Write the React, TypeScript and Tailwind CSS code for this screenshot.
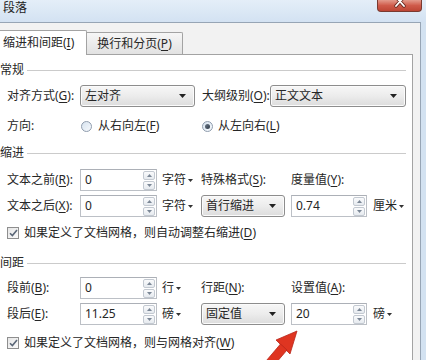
import React from "react";

function Mn({ c }: { c: string }) {
  return <span className="underline underline-offset-[2px] decoration-[1px]">{c}</span>;
}

function Caret({ color = "#222" }: { color?: string }) {
  return (
    <svg width="7" height="4" viewBox="0 0 7 4" className="shrink-0">
      <path d="M0 0h7L3.5 4z" fill={color} />
    </svg>
  );
}

function SmallCaret() {
  return (
    <svg width="5" height="3" viewBox="0 0 5 3" className="shrink-0 ml-[2px] mt-[1px]">
      <path d="M0 0h5L2.5 3z" fill="#333" />
    </svg>
  );
}

function Select({ text, w }: { text: string; w: string }) {
  return (
    <div
      className={`${w} h-[22px] shrink-0 rounded-[3px] border border-[#8d8d8d] bg-linear-to-b from-[#f7f7f7] via-[#ececec] to-[#dcdcdc] shadow-[inset_0_0_0_1px_#fbfbfb] flex items-center justify-between pl-[4px] pr-[8px]`}
    >
      <span>{text}</span>
      <Caret />
    </div>
  );
}

function SpinBtn({ up }: { up?: boolean }) {
  return (
    <div className="w-[12px] h-[9px] rounded-[2px] border border-[#c3c9d1] bg-linear-to-b from-[#fafbfc] to-[#e6eaef] flex items-center justify-center">
      <svg width="5" height="3" viewBox="0 0 5 3">
        <path d={up ? "M0 3h5L2.5 0z" : "M0 0h5L2.5 3z"} fill="#7b8796" />
      </svg>
    </div>
  );
}

function Spin({ value, w }: { value: string; w: string }) {
  return (
    <div
      className={`${w} h-[22px] shrink-0 border border-[#bcc0c6] border-t-[#acb0b7] bg-white flex items-center justify-between pl-[4px] pr-[1px]`}
    >
      <span>{value}</span>
      <div className="flex flex-col gap-[1px]">
        <SpinBtn up />
        <SpinBtn />
      </div>
    </div>
  );
}

function Unit({ text, w }: { text: string; w: string }) {
  return (
    <div className={`${w} shrink-0 flex items-center`}>
      <span>{text}</span>
      <SmallCaret />
    </div>
  );
}

function Heading({ text }: { text: string }) {
  return (
    <div className="h-[16px] flex items-center">
      <span className="leading-[16px]">{text}</span>
      <div className="flex-1 h-px bg-[#cbcbcb] ml-[3px] mr-[6px]" />
    </div>
  );
}

function Radio({ checked }: { checked?: boolean }) {
  return (
    <div className="w-[11px] h-[11px] shrink-0 rounded-full border border-[#8f9cad] bg-linear-to-br from-[#d7e3ef] to-[#f6f9fc] flex items-center justify-center">
      {checked && <div className="w-[5px] h-[5px] rounded-full bg-linear-to-br from-[#6c7a8a] to-[#2f3a47]" />}
    </div>
  );
}

function Check() {
  return (
    <div className="w-[12px] h-[12px] shrink-0 border border-[#8e8e8e] bg-linear-to-br from-[#e6e6e6] to-[#fafafa] flex items-center justify-center">
      <svg width="9" height="8" viewBox="0 0 9 8">
        <path d="M1 4.2 L3.4 6.6 L8 1" stroke="#5a6677" strokeWidth="1.6" fill="none" />
      </svg>
    </div>
  );
}

export default function App() {
  return (
    <div className="relative w-[426px] h-[360px] overflow-hidden bg-[#dbe7f4] text-[12px] leading-[16px] text-[#262626] [font-family:'Noto_Sans','Noto_Sans_CJK_SC',sans-serif]">
      {/* Title bar */}
      <div className="h-[22px] flex items-start bg-linear-to-b from-[#e4eef8] to-[#d3e2f2]">
        <span className="pl-[3px] leading-[16px] text-[#1e1e1e]">段落</span>
        <div className="ml-auto mr-[4px] w-[45px] h-[12px] rounded-b-[4px] border border-t-0 border-[#7a3a30] bg-linear-to-b from-[#e39a8c] via-[#cf5a4a] to-[#bd4534] flex items-start justify-center">
          <svg width="12" height="8" viewBox="0 0 12 8">
            <path d="M2 -3 L10 6 M10 -3 L2 6" stroke="#6b2a22" strokeWidth="3.4" strokeLinecap="round" />
            <path d="M2 -3 L10 6 M10 -3 L2 6" stroke="#ffffff" strokeWidth="1.8" strokeLinecap="round" />
          </svg>
        </div>
      </div>

      {/* Body */}
      <div className="flex h-[338px]">
        <div className="w-[421px] shrink-0 border-t border-r border-[#97a5b5] bg-[#f2f2f2] pt-[7px]">
          {/* Tabs */}
          <div className="flex items-end h-[24px]">
            <div className="relative z-10 w-[87px] h-[25px] -mb-[1px] bg-white border-t border-r border-[#a3a3a3] rounded-tr-[2px] pl-[3px] flex items-center">
              <span>
                缩进和间距(<Mn c="I" />)
              </span>
            </div>
            <div className="w-[96px] h-[22px] border-t border-r border-[#a3a3a3] rounded-tr-[2px] bg-linear-to-b from-[#f6f6f6] to-[#e2e2e2] flex items-center justify-center">
              <span>
                换行和分页(<Mn c="P" />)
              </span>
            </div>
          </div>

          {/* Panel */}
          <div className="w-[413px] h-[320px] bg-white border-t border-r border-[#a3a3a3] flex flex-col">
            <div className="mt-[7px]">
              <Heading text="常规" />
            </div>

            <div className="mt-[7px] h-[22px] flex items-center">
              <span className="w-[80px] pl-[7px] shrink-0">
                对齐方式(<Mn c="G" />):
              </span>
              <Select text="左对齐" w="w-[115px]" />
              <span className="ml-[7px] w-[68px] shrink-0 whitespace-nowrap">
                大纲级别(<Mn c="O" />):
              </span>
              <Select text="正文文本" w="w-[136px]" />
            </div>

            <div className="mt-[11px] h-[16px] flex items-center">
              <span className="w-[81px] pl-[7px] shrink-0">方向:</span>
              <div className="w-[121px] shrink-0 flex items-center gap-[6px]">
                <Radio />
                <span>
                  从右向左(<Mn c="F" />)
                </span>
              </div>
              <div className="flex items-center gap-[5px]">
                <Radio checked />
                <span>
                  从左向右(<Mn c="L" />)
                </span>
              </div>
            </div>

            <div className="mt-[11px]">
              <Heading text="缩进" />
            </div>

            <div className="mt-[8px] h-[22px] flex items-center">
              <span className="w-[80px] pl-[7px] shrink-0">
                文本之前(<Mn c="R" />):
              </span>
              <Spin value="0" w="w-[77px]" />
              <Unit text="字符" w="ml-[5px] w-[39px]" />
              <span className="w-[90px] shrink-0 whitespace-nowrap">
                特殊格式(<Mn c="S" />):
              </span>
              <span className="whitespace-nowrap">
                度量值(<Mn c="Y" />):
              </span>
            </div>

            <div className="mt-[4px] h-[22px] flex items-center">
              <span className="w-[80px] pl-[7px] shrink-0">
                文本之后(<Mn c="X" />):
              </span>
              <Spin value="0" w="w-[77px]" />
              <Unit text="字符" w="ml-[5px] w-[39px]" />
              <Select text="首行缩进" w="w-[84px]" />
              <div className="ml-[6px]">
                <Spin value="0.74" w="w-[76px]" />
              </div>
              <Unit text="厘米" w="ml-[6px] w-[34px]" />
            </div>

            <div className="mt-[8px] h-[16px] flex items-center">
              <div className="ml-[7px]">
                <Check />
              </div>
              <span className="ml-[5px] whitespace-nowrap">
                如果定义了文档网格，则自动调整右缩进(<Mn c="D" />)
              </span>
            </div>

            <div className="mt-[14px]">
              <Heading text="间距" />
            </div>

            <div className="mt-[6px] h-[22px] flex items-center">
              <span className="w-[80px] pl-[7px] shrink-0">
                段前(<Mn c="B" />):
              </span>
              <Spin value="0" w="w-[77px]" />
              <Unit text="行" w="ml-[5px] w-[39px]" />
              <span className="w-[90px] shrink-0 whitespace-nowrap">
                行距(<Mn c="N" />):
              </span>
              <span className="whitespace-nowrap">
                设置值(<Mn c="A" />):
              </span>
            </div>

            <div className="mt-[4px] h-[22px] flex items-center">
              <span className="w-[80px] pl-[7px] shrink-0">
                段后(<Mn c="E" />):
              </span>
              <Spin value="11.25" w="w-[77px]" />
              <Unit text="磅" w="ml-[5px] w-[39px]" />
              <Select text="固定值" w="w-[84px]" />
              <div className="ml-[6px]">
                <Spin value="20" w="w-[76px]" />
              </div>
              <Unit text="磅" w="ml-[6px] w-[34px]" />
            </div>

            <div className="mt-[10px] h-[16px] flex items-center">
              <div className="ml-[7px]">
                <Check />
              </div>
              <span className="ml-[5px] whitespace-nowrap">
                如果定义了文档网格，则与网格对齐(<Mn c="W" />)
              </span>
            </div>
          </div>
        </div>
        <div className="flex-1 bg-[#d3e2f1]" />
      </div>

      {/* Red annotation arrow */}
      <svg
        className="absolute left-0 top-0 pointer-events-none"
        width="426"
        height="360"
        viewBox="0 0 426 360"
      >
        <polygon points="297,331 276,340 290,354" fill="#df3521" stroke="#b8261a" strokeWidth="0.8" />
        <polygon points="280.5,344 287,350 270,370 263.5,364" fill="#df3521" stroke="#b8261a" strokeWidth="0.8" />
      </svg>
    </div>
  );
}
